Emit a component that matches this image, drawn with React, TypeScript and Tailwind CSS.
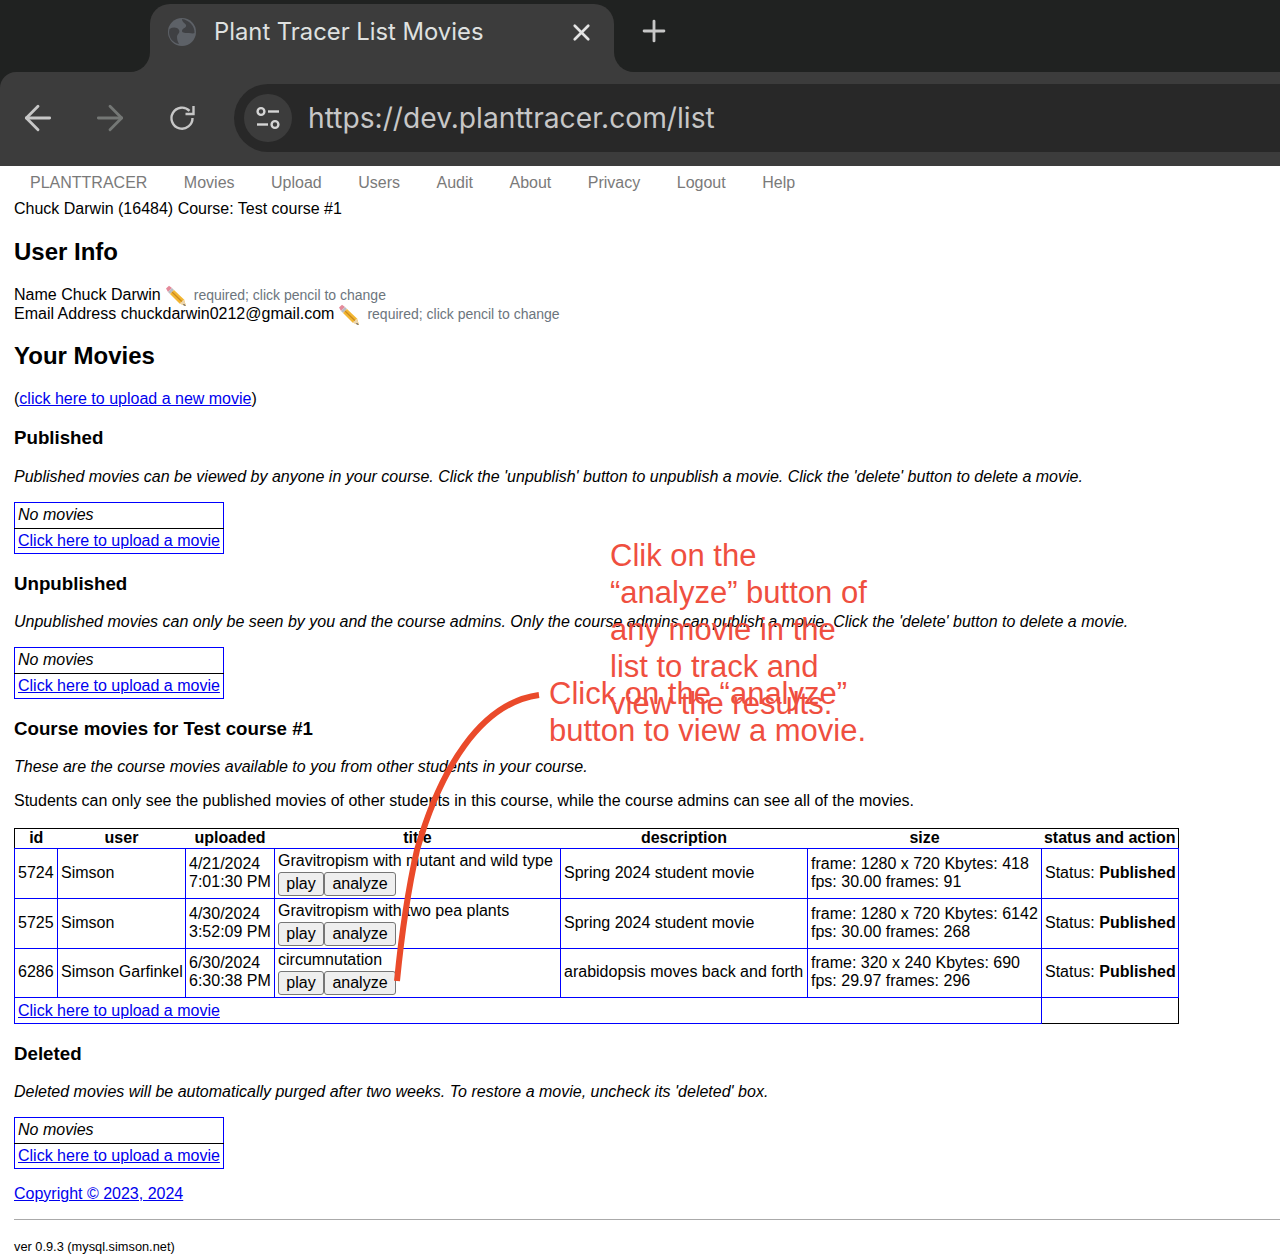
import { ArrowLeft, ArrowRight, Plus, X } from "lucide-react";

const navItems = ["PLANTTRACER", "Movies", "Upload", "Users", "Audit", "About", "Privacy", "Logout", "Help"];

const movies = [
  {
    id: 5724,
    user: "Simson",
    date: "4/21/2024",
    time: "7:01:30 PM",
    title: "Gravitropism with mutant and wild type",
    description: "Spring 2024 student movie",
    frame: "frame: 1280 x 720 Kbytes: 418",
    fps: "fps: 30.00 frames: 91",
  },
  {
    id: 5725,
    user: "Simson",
    date: "4/30/2024",
    time: "3:52:09 PM",
    title: "Gravitropism with two pea plants",
    description: "Spring 2024 student movie",
    frame: "frame: 1280 x 720 Kbytes: 6142",
    fps: "fps: 30.00 frames: 268",
  },
  {
    id: 6286,
    user: "Simson Garfinkel",
    date: "6/30/2024",
    time: "6:30:38 PM",
    title: "circumnutation",
    description: "arabidopsis moves back and forth",
    frame: "frame: 320 x 240 Kbytes: 690",
    fps: "fps: 29.97 frames: 296",
  },
];

function Pencil() {
  return (
    <svg viewBox="0 0 22 22" className="inline-block w-[22px] h-[22px] align-[-3px] -my-[4px] mx-[4px]">
      <path d="M1 3.5 L4 0.8 L7 3 L3 7 Z" fill="#e58a9a" />
      <path d="M3 7 L7 3 L9 5 L5 9 Z" fill="#b9bcc2" />
      <path d="M5 9 L9 5 L19 14.5 L21 21 L14.5 18.5 Z" fill="#f2b632" />
      <path d="M14.5 18.5 L19 14.5 L21 21 Z" fill="#edd6ae" />
      <path d="M19 19 L21 21 L18 20 Z" fill="#3d3d3d" />
      <path d="M7 7 L16.8 16.5" stroke="#c98a1e" strokeWidth="1.2" />
    </svg>
  );
}

function Link({ children }: { children: string }) {
  return <a href="#" className="text-[#0000ee] underline">{children}</a>;
}

function NoMovies({ className }: { className: string }) {
  return (
    <table className={`border-collapse border border-[#0000ff] w-[210px] ${className}`}>
      <tbody>
        <tr className="h-[26px]">
          <td className="border border-[#0000ff] border-b-black px-[3px] pb-[2px] italic leading-[18px]">No movies</td>
        </tr>
        <tr className="h-[25px]">
          <td className="border-x border-b border-[#0000ff] px-[3px] leading-[18px]">
            <Link>Click here to upload a movie</Link>
          </td>
        </tr>
      </tbody>
    </table>
  );
}

function ChromeBar() {
  return (
    <div className="bg-[#202221] h-[166px] text-[#dfe1e0] font-['Inter',sans-serif]">
      <div className="h-[72px] flex">
        <div className="w-[150px] bg-[#3c3c3c]">
          <div className="h-full bg-[#202221] rounded-br-[20px]"></div>
        </div>
        <div className="w-[464px] pt-[4px]">
          <div className="h-[68px] bg-[#3c3c3c] rounded-t-[20px] flex items-start pt-[13px] pl-[18px]">
            <svg viewBox="0 0 28 28" className="w-[28px] h-[28px] mt-[1px] shrink-0">
              <circle cx="14" cy="14" r="14" fill="#5d6167" />
              <path d="M1.5 11 C5 9 9 9 11 12 C12.5 15 9 16 9 19 C9 22 10 24 11 26 C5 25 1 20 1 14 Z" fill="#3f4043" />
              <path d="M14 1 C14 4 17 5 18 7 C19 10 14 10 14 13 C14 15 18 15 21 15 C23 15 25 16 26.5 15 C27 8 21 2 14 1 Z" fill="#3f4043" />
            </svg>
            <span className="ml-[18px] text-[23.8px] leading-[30px] w-[354px] whitespace-nowrap">Plant Tracer List Movies</span>
            <X className="w-[27px] h-[27px] mt-[2px]" strokeWidth={2.4} color="#e3e3e3" />
          </div>
        </div>
        <div className="flex-1 bg-[#3c3c3c]">
          <div className="h-full bg-[#202221] rounded-bl-[20px] pl-[23px] pt-[14px]">
            <Plus className="w-[34px] h-[34px]" strokeWidth={2} color="#c7c7c7" />
          </div>
        </div>
      </div>
      <div className="flex items-center h-[94px] pb-[2px] bg-[#3c3c3c] rounded-tl-[16px]">
        <ArrowLeft className="w-[40px] h-[40px] ml-[18px] shrink-0" strokeWidth={1.7} color="#c7c7c7" />
        <ArrowRight className="w-[40px] h-[40px] ml-[32px] shrink-0" strokeWidth={1.7} color="#747775" />
        <svg viewBox="0 0 28 28" className="w-[28px] h-[28px] ml-[38px] shrink-0" fill="none" stroke="#c7c7c7" strokeWidth="2.4">
          <path d="M24.5 14 A10.5 10.5 0 1 1 21.5 6.8" />
          <path d="M25.5 2 V10 H17.5" />
        </svg>
        <div className="ml-[38px] flex-1 h-[68px] bg-[#282828] rounded-l-[34px] flex items-center pl-[10px]">
          <div className="w-[48px] h-[48px] rounded-full bg-[#3c3c3c] flex items-center justify-center">
            <svg viewBox="0 0 26 26" className="w-[26px] h-[26px]" fill="none" stroke="#d5d5d5" strokeWidth="2.4">
              <circle cx="6" cy="6.5" r="3.4" />
              <path d="M13 6.5 H24" />
              <path d="M2 19.5 H13" />
              <circle cx="20" cy="19.5" r="3.4" />
            </svg>
          </div>
          <span className="ml-[16px] text-[28.2px] text-[#c7c7c7] whitespace-nowrap">https://dev.planttracer.com/list</span>
        </div>
      </div>
    </div>
  );
}

export default function App() {
  return (
    <div className="relative w-[1280px] h-[1260px] overflow-hidden bg-white text-black text-[16px] leading-[18px] font-['Liberation_Sans',Arial,sans-serif]">
      <ChromeBar />

      <nav className="flex h-[34px] items-center pl-[30px] gap-[36.5px] text-[#7a7a7a]">
        {navItems.map((item) => (
          <a key={item} href="#">{item}</a>
        ))}
      </nav>

      <main className="pl-[14px]">
        <div>Chuck Darwin (16484) Course: Test course #1</div>

        <h2 className="text-[24px] leading-[28px] font-bold mt-[20px]">User Info</h2>
        <div className="mt-[20px]">
          Name Chuck Darwin<Pencil /><span className="text-[14px] text-[#6c757d] ml-[3px]">required; click pencil to change</span>
        </div>
        <div className="mt-[1px]">
          Email Address chuckdarwin0212@gmail.com<Pencil /><span className="text-[14px] text-[#6c757d] ml-[3px]">required; click pencil to change</span>
        </div>

        <h2 className="text-[24px] leading-[28px] font-bold mt-[19px]">Your Movies</h2>
        <p className="mt-[20px]">(<Link>click here to upload a new movie</Link>)</p>

        <h3 className="text-[18.72px] leading-[22px] font-bold mt-[19px]">Published</h3>
        <p className="italic mt-[19px]">Published movies can be viewed by anyone in your course. Click the 'unpublish' button to unpublish a movie. Click the 'delete' button to delete a movie.</p>
        <NoMovies className="mt-[16px]" />

        <h3 className="text-[18.72px] leading-[22px] font-bold mt-[19px]">Unpublished</h3>
        <p className="italic mt-[18px]">Unpublished movies can only be seen by you and the course admins. Only the course admins can publish a movie. Click the 'delete' button to delete a movie.</p>
        <NoMovies className="mt-[16px]" />

        <h3 className="text-[18.72px] leading-[22px] font-bold mt-[19px]">Course movies for Test course #1</h3>
        <p className="italic mt-[18px]">These are the course movies available to you from other students in your course.</p>
        <p className="mt-[16px]">Students can only see the published movies of other students in this course, while the course admins can see all of the movies.</p>

        <table className="border-collapse mt-[18px] w-[1164px] table-fixed border border-[#0000ff]">
          <colgroup>
            <col className="w-[43px]" />
            <col className="w-[128px]" />
            <col className="w-[89px]" />
            <col className="w-[286px]" />
            <col className="w-[247px]" />
            <col className="w-[234px]" />
            <col className="w-[137px]" />
          </colgroup>
          <thead>
            <tr className="h-[20px] border border-black border-b-[#0000ff]">
              {["id", "user", "uploaded", "title", "description", "size", "status and action"].map((h) => (
                <th key={h} className="font-bold p-0 pb-[2px] leading-[16px] whitespace-nowrap">{h}</th>
              ))}
            </tr>
          </thead>
          <tbody>
            {movies.map((m, i) => (
              <tr key={m.id} className={i === 2 ? "h-[49px]" : "h-[50px]"}>
                <td className="border border-[#0000ff] px-[3px] pb-[2px]">{m.id}</td>
                <td className="border border-[#0000ff] px-[3px] pb-[2px] whitespace-nowrap">{m.user}</td>
                <td className="border border-[#0000ff] px-[3px] pb-[2px] whitespace-nowrap">{m.date}<br />{m.time}</td>
                <td className="border border-[#0000ff] px-[3px] whitespace-nowrap">
                  <div className="leading-[18px]">{m.title}</div>
                  <div className="flex h-[24px] mt-[2px]">
                    <button className="h-[24px] w-[46px] bg-[#efefef] border border-[#767676] rounded-[3px]">play</button>
                    <button className="h-[24px] w-[72px] bg-[#efefef] border border-[#767676] rounded-[3px]">analyze</button>
                  </div>
                </td>
                <td className="border border-[#0000ff] px-[3px] pb-[2px] whitespace-nowrap">{m.description}</td>
                <td className="border border-[#0000ff] px-[3px] pb-[2px] whitespace-nowrap">{m.frame}<br />{m.fps}</td>
                <td className="border border-[#0000ff] px-[3px] pb-[2px] whitespace-nowrap">Status: <b>Published</b></td>
              </tr>
            ))}
            <tr className="h-[26px]">
              <td colSpan={6} className="border border-[#0000ff] px-[3px]"><Link>Click here to upload a movie</Link></td>
              <td className="border border-[#0000ff] border-r-black border-b-black"></td>
            </tr>
          </tbody>
        </table>

        <h3 className="text-[18.72px] leading-[22px] font-bold mt-[19px]">Deleted</h3>
        <p className="italic mt-[18px]">Deleted movies will be automatically purged after two weeks. To restore a movie, uncheck its 'deleted' box.</p>
        <NoMovies className="mt-[16px]" />

        <p className="mt-[16px]"><Link>Copyright © 2023, 2024</Link></p>
        <hr className="mt-[16px] border-[#aaaaaa]" />
        <p className="text-[12.8px] mt-[18px]">ver 0.9.3 (mysql.simson.net)</p>
      </main>

      {/* annotation layered on top of the page */}
      <div className="absolute left-[610px] top-[537px] w-[280px] text-[31px] leading-[37px] text-[#ef4f3f]">
        Clik on the<br />“analyze” button of<br />any movie in the<br />list to track and<br />view the results.
      </div>
      <div className="absolute left-[549px] top-[675px] w-[340px] text-[31px] leading-[37px] text-[#ef4f3f] whitespace-nowrap">
        Click on the “analyze”<br />button to view a movie.
      </div>
      <svg className="absolute left-0 top-0 pointer-events-none" width="1280" height="1260" viewBox="0 0 1280 1260" fill="none">
        <path d="M539 695 C480 703 440 770 417 850 C408 890 401 940 397 981" stroke="#ea4a2a" strokeWidth="6" />
      </svg>
    </div>
  );
}
